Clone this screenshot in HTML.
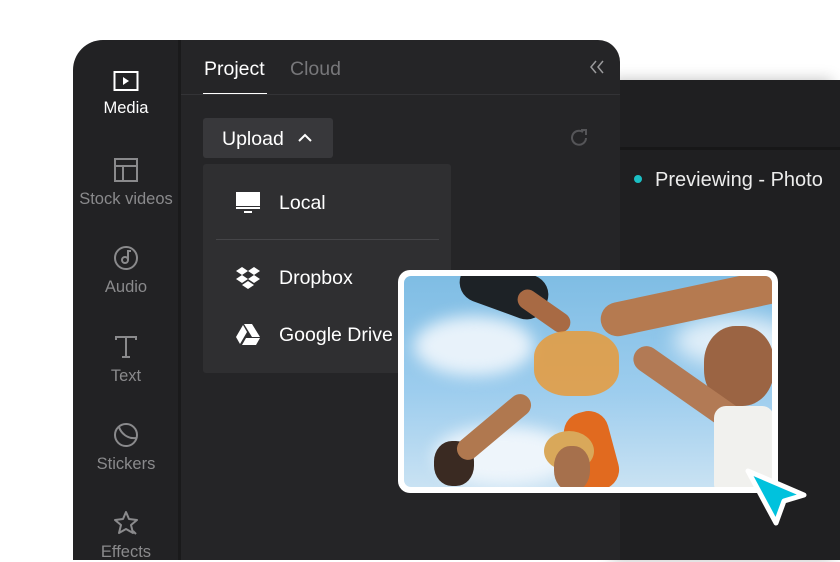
<!DOCTYPE html>
<html><head><meta charset="utf-8"><style>
*{margin:0;padding:0;box-sizing:border-box}
body{width:840px;height:560px;background:#fff;position:relative;overflow:hidden;font-family:"Liberation Sans",sans-serif}
.abs{position:absolute}
.side{left:73px;top:40px;width:106px;height:520px;background:#222224;border-top-left-radius:30px}
.sep{left:178px;top:40px;width:3px;height:520px;background:#1a1a1b}
.main{left:181px;top:40px;width:439px;height:520px;background:#252527;border-top-right-radius:22px}
.right{left:619px;top:80px;width:221px;height:480px;background:#1f1f21;box-shadow:-8px 0 14px rgba(0,0,0,.25)}
.si{width:106px;text-align:center;color:#8a8a8c;font-size:16.5px}
.si svg{display:block;margin:0 auto 7px}
</style></head><body>
<div class="abs right"></div>
<div class="abs" style="left:619px;top:147px;width:221px;height:3px;background:#171718"></div>
<div class="abs" style="left:634px;top:175px;width:8px;height:8px;border-radius:50%;background:#1bbfc4"></div>
<div class="abs" style="left:655px;top:169px;color:#ececec;font-size:20px">Previewing - Photo</div>

<div class="abs side"></div>
<div class="abs sep"></div>
<div class="abs main"></div>

<div class="abs si" style="left:73px;top:70px;color:#fff">
<svg width="26" height="22" viewBox="0 0 26 22"><rect x="1.5" y="2" width="23" height="18" fill="none" stroke="#fff" stroke-width="2"/><path d="M10 7l6 4-6 4z" fill="#fff"/></svg>Media</div>
<div class="abs si" style="left:73px;top:157px">
<svg width="26" height="26" viewBox="0 0 26 26"><rect x="2" y="2" width="22" height="22" fill="none" stroke="#8a8a8c" stroke-width="2"/><path d="M2 9h22M10 9v15" stroke="#8a8a8c" stroke-width="2"/></svg>Stock videos</div>
<div class="abs si" style="left:73px;top:245px">
<svg width="26" height="26" viewBox="0 0 26 26"><circle cx="13" cy="13" r="11" fill="none" stroke="#8a8a8c" stroke-width="2"/><circle cx="12" cy="15" r="3" fill="none" stroke="#8a8a8c" stroke-width="2"/><path d="M15 15V6h3" fill="none" stroke="#8a8a8c" stroke-width="2"/></svg>Audio</div>
<div class="abs si" style="left:73px;top:334px">
<svg width="26" height="26" viewBox="0 0 26 26"><path d="M3 6V3h20v3M13 3v20M9 23h8" fill="none" stroke="#8a8a8c" stroke-width="2"/></svg>Text</div>
<div class="abs si" style="left:73px;top:422px">
<svg width="26" height="26" viewBox="0 0 26 26"><circle cx="13" cy="13" r="11" fill="none" stroke="#8a8a8c" stroke-width="2"/><path d="M6 5c2 6 8 12 17 11" fill="none" stroke="#8a8a8c" stroke-width="2"/></svg>Stickers</div>
<div class="abs si" style="left:73px;top:510px">
<svg width="26" height="26" viewBox="0 0 26 26"><path d="M13 2l3 7 8 1-6 5 2 8-7-4-7 4 2-8-6-5 8-1z" fill="none" stroke="#8a8a8c" stroke-width="2" stroke-linejoin="round"/><path d="M20 21l3 3" stroke="#8a8a8c" stroke-width="2"/></svg>Effects</div>

<div class="abs" style="left:204px;top:58px;color:#fff;font-size:19.5px">Project</div>
<div class="abs" style="left:290px;top:58px;color:#77777a;font-size:19.5px">Cloud</div>
<div class="abs" style="left:203px;top:93px;width:64px;height:2px;background:#fff"></div>
<div class="abs" style="left:181px;top:94px;width:439px;height:1px;background:#333336"></div>
<svg class="abs" style="left:588px;top:60px" width="18" height="14" viewBox="0 0 18 14"><path d="M8 1L3 7l5 6M15 1l-5 6 5 6" fill="none" stroke="#9a9a9c" stroke-width="1.5"/></svg>

<div class="abs" style="left:203px;top:118px;width:130px;height:40px;background:#38383b;border-radius:3px;color:#fff;font-size:19.5px;padding:10px 0 0 19px">Upload</div>
<svg class="abs" style="left:297px;top:133px" width="16" height="10" viewBox="0 0 16 10"><path d="M2 8l6-6 6 6" fill="none" stroke="#fff" stroke-width="2"/></svg>
<svg class="abs" style="left:568px;top:127px" width="22" height="22" viewBox="0 0 22 22"><path d="M18 11a7 7 0 1 1-3-6" fill="none" stroke="#555558" stroke-width="2"/><path d="M13 3h5v5" fill="none" stroke="#555558" stroke-width="2"/></svg>

<div class="abs" style="left:203px;top:164px;width:248px;height:209px;background:#2f2f31;border-radius:3px"></div>
<div class="abs" style="left:216px;top:239px;width:223px;height:1px;background:#454548"></div>
<svg class="abs" style="left:236px;top:192px" width="24" height="22" viewBox="0 0 24 22"><rect x="0" y="0" width="24" height="14" fill="#fff"/><rect x="0" y="15" width="24" height="2" fill="#fff"/><rect x="8" y="19" width="8" height="2" fill="#fff"/></svg>
<div class="abs" style="left:279px;top:192px;color:#fff;font-size:19.5px">Local</div>
<svg class="abs" style="left:235px;top:266px" width="26" height="24" viewBox="0 0 26 24"><path d="M7 1l6 4-6 4-6-4zM19 1l6 4-6 4-6-4zM7 9l6 4-6 4-6-4zM19 9l6 4-6 4-6-4zM13 15l6 4-6 4-6-4z" fill="#fff"/></svg>
<div class="abs" style="left:279px;top:267px;color:#fff;font-size:19.5px">Dropbox</div>
<svg class="abs" style="left:236px;top:324px" width="24" height="21" viewBox="0 0 24 21"><path d="M8 0h8l8 13h-8z" fill="#fff"/><path d="M7 1l4 7-7 12-4-7z" fill="#fff"/><path d="M6 21l4-7h14l-4 7z" fill="#fff"/></svg>
<div class="abs" style="left:279px;top:324px;color:#fff;font-size:19.5px">Google Drive</div>

<div class="abs" style="left:398px;top:270px;width:380px;height:223px;background:#fff;border-radius:12px;padding:6px">
<div style="position:relative;width:100%;height:100%;border-radius:7px;overflow:hidden;background:linear-gradient(180deg,#7fbde4 0%,#9dcdee 55%,#c9e2f3 100%)">
<div class="abs" style="left:10px;top:40px;width:120px;height:60px;background:#e8f2fa;border-radius:50%;filter:blur(8px)"></div>
<div class="abs" style="left:30px;top:150px;width:140px;height:60px;background:#eef5fb;border-radius:50%;filter:blur(8px)"></div>
<div class="abs" style="left:270px;top:40px;width:120px;height:50px;background:#e0eef8;border-radius:50%;filter:blur(10px)"></div>
<div class="abs" style="left:55px;top:-10px;width:90px;height:45px;background:#1d2226;border-radius:20px;transform:rotate(20deg)"></div>
<div class="abs" style="left:110px;top:25px;width:60px;height:20px;background:#a86a44;border-radius:10px;transform:rotate(35deg)"></div>
<div class="abs" style="left:195px;top:10px;width:190px;height:34px;background:#b57a50;border-radius:18px;transform:rotate(-12deg)"></div>
<div class="abs" style="left:300px;top:50px;width:70px;height:80px;background:#9b6443;border-radius:45%"></div>
<div class="abs" style="left:220px;top:100px;width:130px;height:26px;background:#b27a55;border-radius:13px;transform:rotate(35deg)"></div>
<div class="abs" style="left:310px;top:130px;width:60px;height:90px;background:#f1f1ee;border-radius:12px"></div>
<div class="abs" style="left:130px;top:55px;width:85px;height:65px;background:#e89a3a;border-radius:40%;opacity:.85"></div>
<div class="abs" style="left:165px;top:135px;width:45px;height:80px;background:#e16a1f;border-radius:20px;transform:rotate(-15deg)"></div>
<div class="abs" style="left:140px;top:155px;width:50px;height:40px;background:#d9a85a;border-radius:50%"></div>
<div class="abs" style="left:150px;top:170px;width:36px;height:45px;background:#a6704c;border-radius:45%"></div>
<div class="abs" style="left:30px;top:165px;width:40px;height:45px;background:#3a2a22;border-radius:45%"></div>
<div class="abs" style="left:45px;top:140px;width:90px;height:22px;background:#b0784f;border-radius:11px;transform:rotate(-40deg)"></div>
</div></div>
<svg class="abs" style="left:742px;top:465px" width="66" height="64" viewBox="0 0 66 64"><path d="M6 6l56 24-20 6-8 22z" fill="#00c2dd" stroke="#fff" stroke-width="5" stroke-linejoin="round"/></svg>
</body></html>
